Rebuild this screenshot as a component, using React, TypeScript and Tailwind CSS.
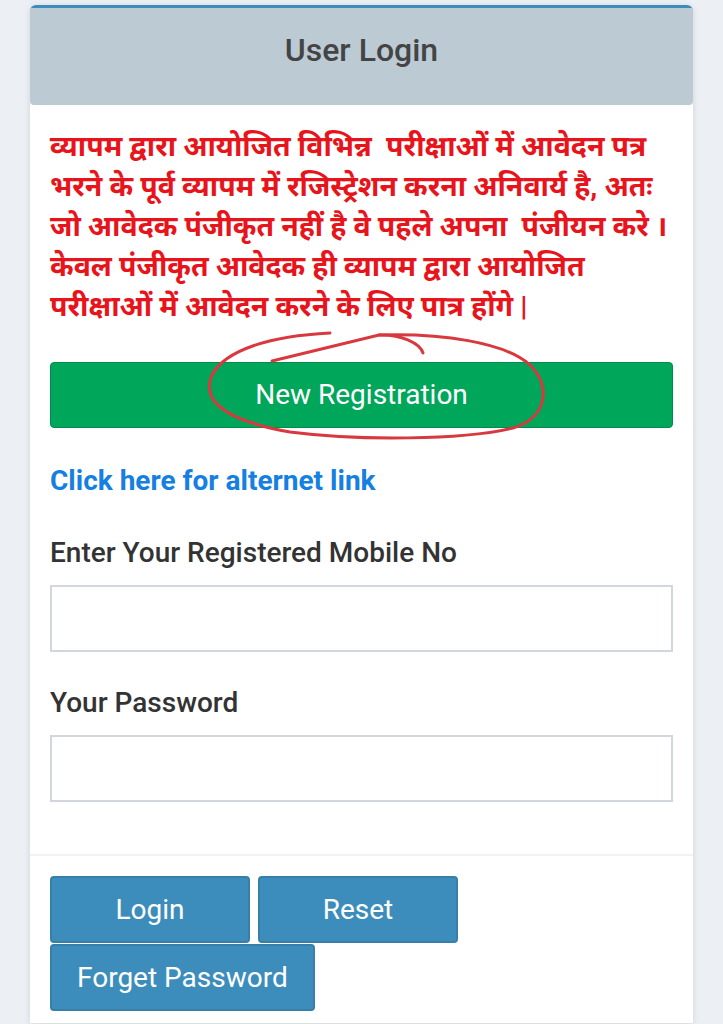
export default function App() {
  return (
    <div className="min-h-[1024px] bg-[#ecf0f5] pt-[5px] font-['Roboto','Noto_Sans_Devanagari','Lohit_Devanagari','Noto_Sans',sans-serif]">
      <div className="mx-[30px] rounded-t-[6px] border-t-[3px] border-[#3c8dbc] bg-white shadow-[0_1px_6px_rgba(0,0,0,0.12)]">
        <div className="flex h-[97px] items-center justify-center rounded-b-[4px] bg-[#bccad4] pb-[14px]">
          <h3 className="text-[32px] font-medium text-[#444]">User Login</h3>
        </div>

        <div className="px-[20px] pt-[22px] pb-[52px]">
          <p className="whitespace-nowrap text-[28.5px] font-bold leading-[40px] text-[#e8141b]">
            व्यापम द्वारा आयोजित विभिन्न&nbsp; परीक्षाओं में आवेदन पत्र
            <br />
            भरने के पूर्व व्यापम में रजिस्ट्रेशन करना अनिवार्य है, अतः
            <br />
            जो आवेदक पंजीकृत नहीं है वे पहले अपना&nbsp; पंजीयन करे ।
            <br />
            केवल पंजीकृत आवेदक ही व्यापम द्वारा आयोजित
            <br />
            परीक्षाओं में आवेदन करने के लिए पात्र होंगे |
          </p>

          <div className="relative mt-[35px]">
            <button className="flex h-[66px] w-full items-center justify-center rounded-[4px] border border-[#008d4c] bg-[#00a65a] text-[28px] text-white">
              New Registration
            </button>
            <svg
              className="pointer-events-none absolute left-[150px] top-[-37px]"
              width="360"
              height="120"
              viewBox="200 325 360 120"
              fill="none"
              stroke="#d8393f"
              strokeWidth="3"
              strokeLinecap="round"
            >
              <path d="M330 333 C270 336 225 350 212 375 C200 402 228 421 290 432 C360 441 462 440 513 428 C548 418 551 385 530 365 C505 342 440 333 379 335" />
              <path d="M272 361 L379 335 C400 334 420 343 423 353" />
            </svg>
          </div>

          <a className="mt-[33px] block text-[28px] font-bold leading-[40px] text-[#157fe2]">
            Click here for alternet link
          </a>

          <label className="mt-[32px] block text-[28px] font-medium leading-[40px] text-[#333]">
            Enter Your Registered Mobile No
          </label>
          <input className="mt-[12px] block h-[67px] w-full border-2 border-[#d2d6de] bg-white px-3 text-[26px] outline-none" />

          <label className="mt-[31px] block text-[28px] font-medium leading-[40px] text-[#333]">
            Your Password
          </label>
          <input type="password" className="mt-[12px] block h-[67px] w-full border-2 border-[#d2d6de] bg-white px-3 text-[26px] outline-none" />
        </div>

        <div className="border-t-2 border-[#f2f2f2] px-[20px] pt-[20px] pb-[12px]">
          <div className="flex w-[420px] flex-wrap gap-x-[8px] gap-y-[1px]">
            <button className="h-[67px] w-[200px] rounded-[4px] border-2 border-[#367fa9] bg-[#3c8dbc] text-[28px] text-white">
              Login
            </button>
            <button className="h-[67px] w-[200px] rounded-[4px] border-2 border-[#367fa9] bg-[#3c8dbc] text-[28px] text-white">
              Reset
            </button>
            <button className="h-[67px] rounded-[4px] border-2 border-[#367fa9] bg-[#3c8dbc] px-[25px] text-[28px] text-white">
              Forget Password
            </button>
          </div>
        </div>
      </div>
    </div>
  );
}
